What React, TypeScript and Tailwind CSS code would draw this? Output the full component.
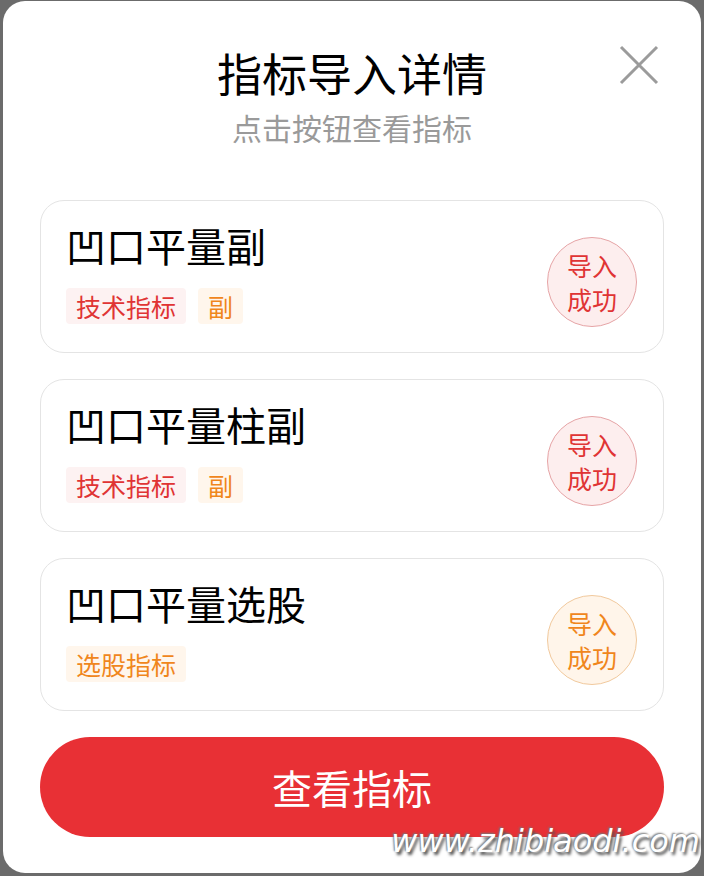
type Tag = { label: string; tone: 'red' | 'orange' };

const items: { name: string; tags: Tag[]; tone: 'red' | 'orange' }[] = [
  { name: '凹口平量副', tags: [{ label: '技术指标', tone: 'red' }, { label: '副', tone: 'orange' }], tone: 'red' },
  { name: '凹口平量柱副', tags: [{ label: '技术指标', tone: 'red' }, { label: '副', tone: 'orange' }], tone: 'red' },
  { name: '凹口平量选股', tags: [{ label: '选股指标', tone: 'orange' }], tone: 'orange' },
];

const font = { fontFamily: '"Noto Sans CJK SC", "Noto Sans", sans-serif' };

const App = () => {
  return (
    <div className="relative w-[704px] h-[876px] bg-[#6b6b6b] pt-px px-[3px] pb-[3px]" style={font}>
      <div className="relative h-full bg-white rounded-[22px] px-[37px]">
        {/* Close */}
        <button className="absolute right-[42px] top-[44px]">
          <svg width="40" height="40" viewBox="0 0 40 40" fill="none" stroke="#9b9b9b" strokeWidth="3">
            <path d="M2 2L38 38M38 2L2 38" />
          </svg>
        </button>

        {/* Header */}
        <div className="pt-[44px] text-center">
          <h1 className="text-[45px] leading-[56px] text-black">指标导入详情</h1>
          <p className="mt-[6px] text-[30px] leading-[40px] text-[#9a9a9a]">点击按钮查看指标</p>
        </div>

        {/* Cards */}
        <div className="mt-[53px] flex flex-col gap-[26px]">
          {items.map((item, i) => (
            <div
              key={i}
              className="flex justify-between h-[153px] rounded-[24px] border border-[#e4e4e4] pl-[25px] pr-[26px]"
            >
              <div className="flex flex-col pt-[19px]">
                <h3 className="text-[40px] leading-[50px] text-black">{item.name}</h3>
                <div className="mt-[18px] flex gap-[12px]">
                  {item.tags.map((tag, j) => (
                    <span
                      key={j}
                      className={`px-[10px] h-[36px] flex items-center text-[25px] leading-none rounded-[4px] ${
                        tag.tone === 'red' ? 'bg-[#fdf2f2] text-[#e03434]' : 'bg-[#fff6ec] text-[#f0861c]'
                      }`}
                    >
                      {tag.label}
                    </span>
                  ))}
                </div>
              </div>
              <div
                className={`self-center mt-[10px] w-[90px] h-[90px] rounded-full border flex flex-col items-center justify-center text-[25px] leading-[34px] ${
                  item.tone === 'red'
                    ? 'border-[#e6a4a6] bg-[#fdeeee] text-[#e03434]'
                    : 'border-[#f1c99d] bg-[#fff5ea] text-[#f0861c]'
                }`}
              >
                <span>导入</span>
                <span>成功</span>
              </div>
            </div>
          ))}
        </div>

        {/* Action */}
        <button className="mt-[26px] w-full h-[100px] rounded-full bg-[#e83035] text-white text-[40px] leading-none">
          查看指标
        </button>
      </div>

      {/* Watermark */}
      <div
        className="absolute right-[4px] bottom-[19px] text-white italic text-[32px] leading-none"
        style={{ fontFamily: '"DejaVu Sans", sans-serif', textShadow: '2px 3px 3px #555, -1px -1px 2px #777' }}
      >
        www.zhibiaodi.com
      </div>
    </div>
  );
};

export default App;
